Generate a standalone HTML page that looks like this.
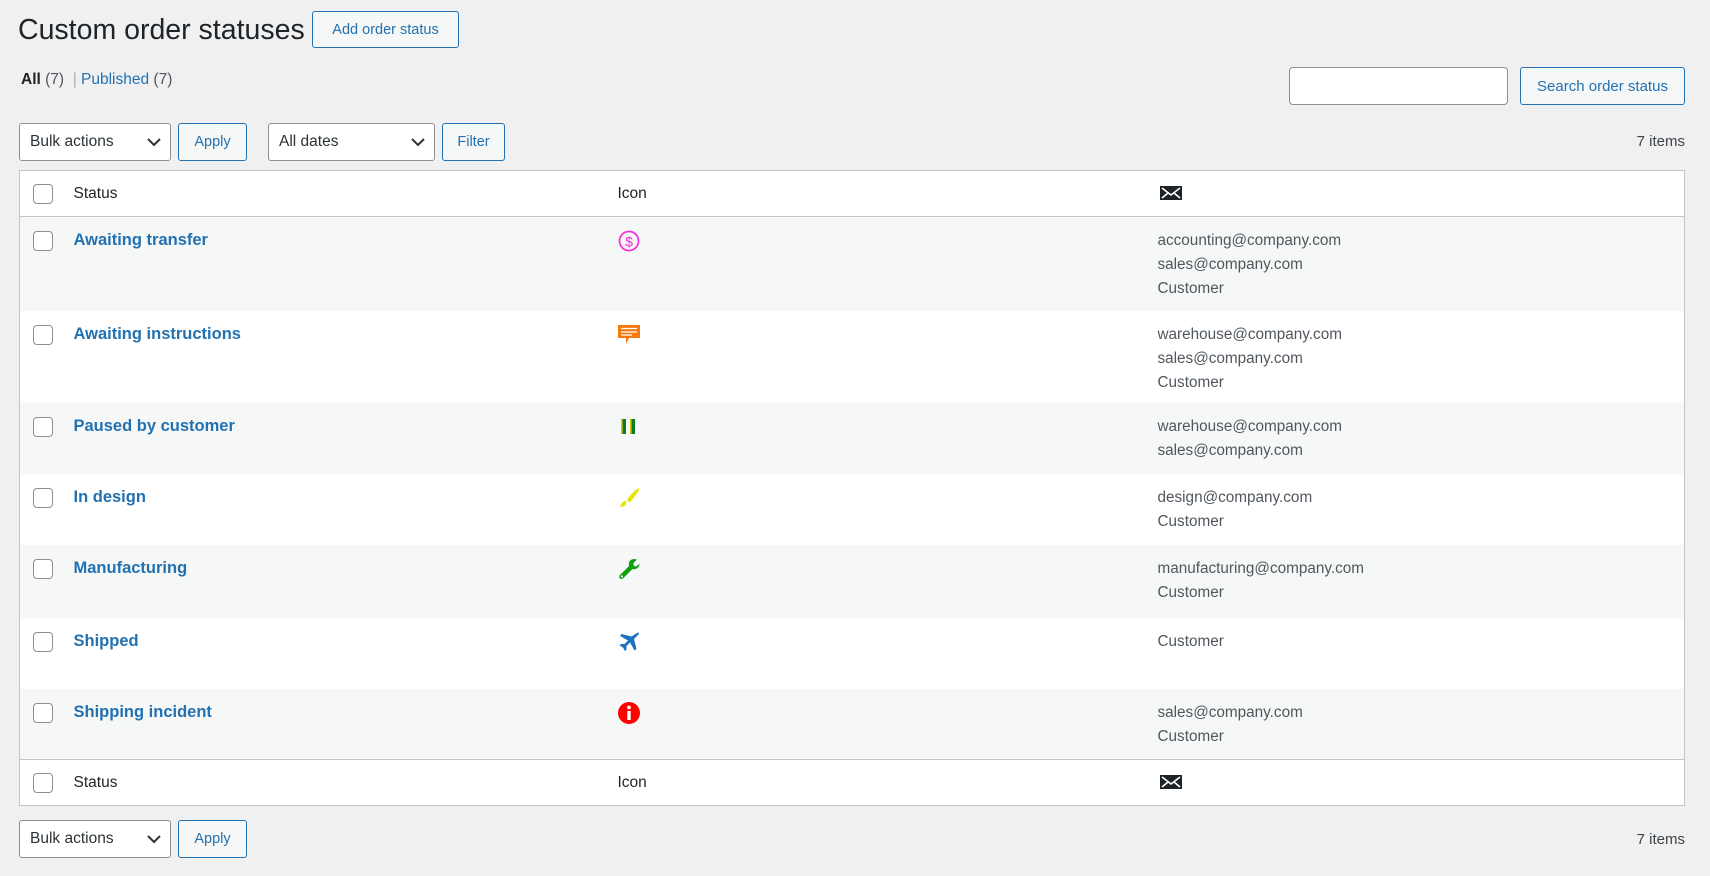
<!DOCTYPE html>
<html><head><meta charset="utf-8"><style>
*{box-sizing:border-box;margin:0;padding:0}
body{width:1710px;height:876px;background:#f0f0f1;font-family:"Liberation Sans",sans-serif;font-size:14px;color:#3c434a;position:relative;overflow:hidden}
.a{position:absolute}
h1{position:absolute;left:18px;top:12px;font-size:28.5px;font-weight:400;color:#1d2327;line-height:36px}
.btn{position:absolute;border:1px solid #2271b1;border-radius:3px;background:#f6f7f7;color:#2271b1;font-size:14.5px;display:flex;align-items:center;justify-content:center}
.sel{position:absolute;border:1px solid #8c8f94;border-radius:3px;background:#fff;color:#2c3338;font-size:15.5px;display:flex;align-items:center;padding-left:10px}
.sel svg{position:absolute;right:9px;top:13px}
.cb{position:absolute;left:13px;width:20px;height:20px;border:1px solid #8c8f94;border-radius:4px;background:#fff}
table{position:absolute;left:19px;top:170px;width:1666px;border:1px solid #c3c4c7;border-collapse:collapse;background:#fff}
td{vertical-align:top;position:relative;padding:0}
tr.h td{height:46px;vertical-align:middle;color:#1d2327;font-size:15.5px}
tr.h{border-bottom:1px solid #c3c4c7}
tr.f{border-top:1px solid #c3c4c7}
tr.s td{background:#f6f7f7}
.c1{width:54px}.c2{width:544px}.c3{width:540px}
a{color:#2271b1;font-weight:700;text-decoration:none;font-size:16.5px;line-height:24px;display:block;padding-top:11px}
.m{line-height:24px;padding-top:12px;font-size:15.3px;color:#50575e}
.ic{position:absolute;left:0;top:13px}
</style></head><body>
<h1>Custom order statuses</h1>
<div class="btn" style="left:312px;top:11px;width:147px;height:37px">Add order status</div>
<div class="a" style="left:21px;top:71px;font-size:15.5px"><b style="color:#1d2327">All</b> <span style="color:#50575e">(7)</span> <span style="color:#a7aaad">&nbsp;|&nbsp;</span><span style="color:#2271b1">Published</span> <span style="color:#50575e">(7)</span></div>
<div class="a" style="left:1289px;top:67px;width:219px;height:38px;border:1px solid #8c8f94;border-radius:4px;background:#fff"></div>
<div class="btn" style="left:1520px;top:67px;width:165px;height:38px;font-size:15px">Search order status</div>

<div class="sel" style="left:19px;top:123px;width:152px;height:38px">Bulk actions<svg width="14" height="10"><path d="M1 2l6 6 6-6" stroke="#2c3338" stroke-width="2" fill="none"/></svg></div>
<div class="btn" style="left:178px;top:123px;width:69px;height:38px">Apply</div>
<div class="sel" style="left:268px;top:123px;width:167px;height:38px">All dates<svg width="14" height="10"><path d="M1 2l6 6 6-6" stroke="#2c3338" stroke-width="2" fill="none"/></svg></div>
<div class="btn" style="left:442px;top:123px;width:63px;height:38px">Filter</div>
<div class="a" style="right:25px;top:133px;color:#3c434a;font-size:15px">7 items</div>

<table>
<tr class="h"><td class="c1"><div class="cb" style="top:13px"></div></td><td class="c2">Status</td><td class="c3">Icon</td><td><svg width="22" height="14" style="margin-top:4px;margin-left:2px"><rect width="22" height="14" fill="#1d2327"/><path d="M2 2l9 7 9-7M2 12l6-5M20 12l-6-5" stroke="#fff" stroke-width="1.6" fill="none"/></svg></td></tr>
<tr class="s" style="height:94px"><td><div class="cb" style="top:14px"></div></td><td><a>Awaiting transfer</a></td><td><svg class="ic" width="22" height="22"><circle cx="11" cy="11" r="9.5" fill="none" stroke="#f02fd9" stroke-width="1.7"/><text x="11" y="16.5" font-size="14" text-anchor="middle" fill="#f02fd9" font-family="Liberation Sans">$</text></svg></td><td><div class="m">accounting@company.com<br>sales@company.com<br>Customer</div></td></tr>
<tr style="height:92px"><td><div class="cb" style="top:14px"></div></td><td><a>Awaiting instructions</a></td><td><svg class="ic" width="22" height="22"><path d="M0 1h22v13H11l-3 6v-6H0z" fill="#f7780e"/><path d="M3 4.5h16M3 8h16M3 11h11" stroke="#fff" stroke-width="1.3"/></svg></td><td><div class="m">warehouse@company.com<br>sales@company.com<br>Customer</div></td></tr>
<tr class="s" style="height:71px"><td><div class="cb" style="top:14px"></div></td><td><a>Paused by customer</a></td><td><svg class="ic" width="22" height="22"><rect x="3" y="3" width="5" height="15" fill="#0a7a2c"/><rect x="3" y="3" width="1.6" height="15" fill="#d9c400"/><rect x="12" y="3" width="5" height="15" fill="#0a7a2c"/><rect x="12" y="3" width="1.6" height="15" fill="#d9c400"/></svg></td><td><div class="m">warehouse@company.com<br>sales@company.com</div></td></tr>
<tr style="height:71px"><td><div class="cb" style="top:14px"></div></td><td><a>In design</a></td><td><svg class="ic" width="22" height="22"><path d="M21 1c-3 1-10 8-12 12l2.5 2.5c3-3 10-11 9.5-14.5zM8 14c-3 0-5 2-6 6 4 0 6-2 6.5-4.5z" fill="#e6e600"/></svg></td><td><div class="m">design@company.com<br>Customer</div></td></tr>
<tr class="s" style="height:73px"><td><div class="cb" style="top:14px"></div></td><td><a>Manufacturing</a></td><td><svg class="ic" width="22" height="22"><path d="M16 1c-3.5 0-6 3-5 7L2 17c-1.5 1.5-.5 4 1.5 4 1 0 1.5-.5 2-1l9-9c3.5 1 7-1.5 7-5l-3.5 2.5-2.5-1V5l3.5-3.5z" fill="#12a012"/><circle cx="4" cy="18.5" r="1.1" fill="#fff"/></svg></td><td><div class="m">manufacturing@company.com<br>Customer</div></td></tr>
<tr style="height:71px"><td><div class="cb" style="top:14px"></div></td><td><a>Shipped</a></td><td><svg class="ic" width="22" height="22"><path d="M19 2c1.5-1 2.5 0 1.5 1.5l-4.5 4.5 2.5 10-2 1.5-4.5-8-3.5 3.5v3.5l-1.5 1.5-2-3.5-3.5-2 1.5-1.5h3.5l3.5-3.5-8-4.5 1.5-2 10 2.5z" fill="#1e73be"/></svg></td><td><div class="m">Customer</div></td></tr>
<tr class="s" style="height:71px"><td><div class="cb" style="top:14px"></div></td><td><a>Shipping incident</a></td><td><svg class="ic" width="22" height="22"><circle cx="11" cy="11" r="11" fill="#f00"/><circle cx="11" cy="5.5" r="1.9" fill="#fff"/><rect x="9.3" y="9" width="3.4" height="9" fill="#fff"/></svg></td><td><div class="m">sales@company.com<br>Customer</div></td></tr>
<tr class="h f"><td><div class="cb" style="top:13px"></div></td><td>Status</td><td>Icon</td><td><svg width="22" height="14" style="margin-top:4px;margin-left:2px"><rect width="22" height="14" fill="#1d2327"/><path d="M2 2l9 7 9-7M2 12l6-5M20 12l-6-5" stroke="#fff" stroke-width="1.6" fill="none"/></svg></td></tr>
</table>

<div class="sel" style="left:19px;top:820px;width:152px;height:38px">Bulk actions<svg width="14" height="10"><path d="M1 2l6 6 6-6" stroke="#2c3338" stroke-width="2" fill="none"/></svg></div>
<div class="btn" style="left:178px;top:820px;width:69px;height:38px">Apply</div>
<div class="a" style="right:25px;top:831px;color:#3c434a;font-size:15px">7 items</div>
</body></html>
